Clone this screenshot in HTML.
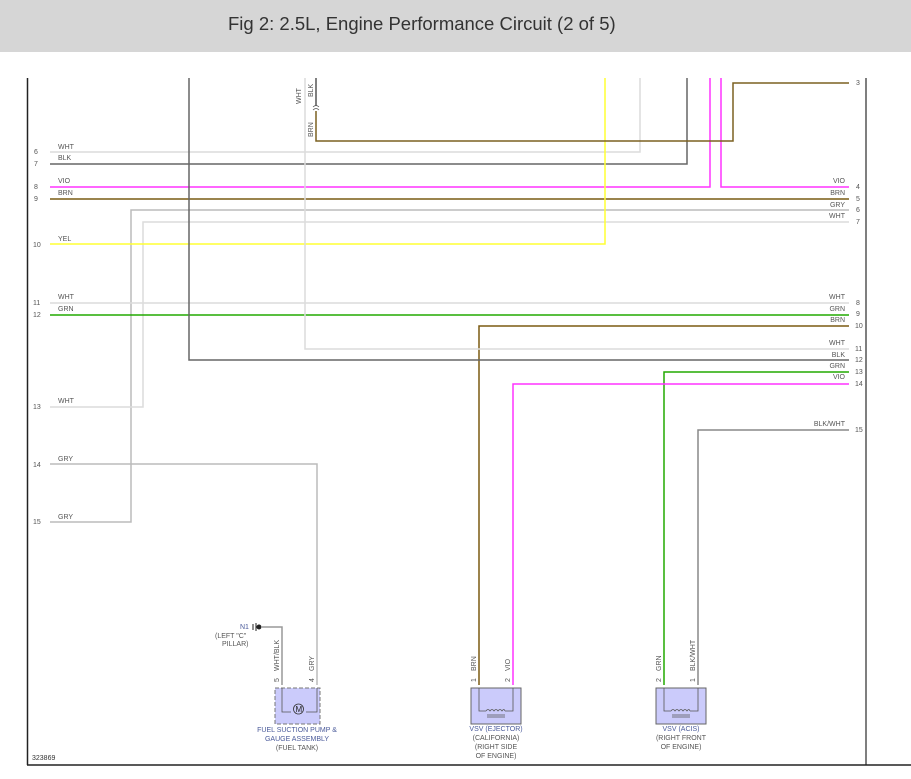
<!DOCTYPE html>
<html><head><meta charset="utf-8"><style>
html,body{margin:0;padding:0;background:#fff;width:911px;height:779px;overflow:hidden}
.hdr{position:absolute;left:0;top:0;width:911px;height:52px;background:#d6d6d6;}
.hdr span{position:absolute;left:228px;top:13px;font:18.5px "Liberation Sans",sans-serif;color:#333;}
svg{position:absolute;left:0;top:0}
text{font-family:"Liberation Sans",sans-serif;font-size:7px;fill:#555}
.b{fill:#4a5a9a}
</style></head><body>
<div class="hdr"><span>Fig 2: 2.5L, Engine Performance Circuit (2 of 5)</span></div>
<svg width="911" height="779" viewBox="0 0 911 779">
<g fill="none" stroke-width="1.5">
<line x1="27.5" y1="78" x2="27.5" y2="765" stroke="#222" stroke-width="1.5"/>
<line x1="866" y1="78" x2="866" y2="765" stroke="#555" stroke-width="1.5"/>
<line x1="27" y1="765" x2="911" y2="765" stroke="#222" stroke-width="1.5"/>
<polyline points="50,152 640,152 640,78" stroke="#dcdcdc"/>
<polyline points="50,164 687,164 687,78" stroke="#666"/>
<polyline points="50,187 710,187 710,78" stroke="#ff33ff"/>
<polyline points="721,78 721,187 849,187" stroke="#ff33ff"/>
<line x1="50" y1="199" x2="849" y2="199" stroke="#8b7335" stroke-width="1.8"/>
<polyline points="849,210 131,210 131,522 50,522" stroke="#bbb"/>
<polyline points="849,222 143,222 143,407 50,407" stroke="#dcdcdc"/>
<polyline points="50,244 605,244 605,78" stroke="#ffff33"/>
<line x1="50" y1="303" x2="849" y2="303" stroke="#dcdcdc"/>
<line x1="50" y1="315" x2="849" y2="315" stroke="#22aa00"/>
<polyline points="849,326 479,326 479,685" stroke="#7b5a10"/>
<polyline points="189,78 189,360 849,360" stroke="#666"/>
<polyline points="305,78 305,349 849,349" stroke="#dcdcdc"/>
<polyline points="316,78 316,106" stroke="#555"/>
<polyline points="316,111 316,141 733,141 733,83 849,83" stroke="#7b6020"/>
<path d="M313,107 q3,-3 6,0 M313,110 q3,-3 6,0" stroke="#555" stroke-width="0.8"/>
<polyline points="849,372 664,372 664,685" stroke="#22aa00"/>
<polyline points="849,384 513,384 513,685" stroke="#ff33ff"/>
<polyline points="849,430 698,430 698,685" stroke="#888"/>
<polyline points="50,464 317,464 317,685" stroke="#bbb"/>
<polyline points="262,627 282,627 282,685" stroke="#999"/>
</g>
<g stroke="#222" stroke-width="1"><line x1="253" y1="624" x2="253" y2="630"/><line x1="256" y1="623" x2="256" y2="631"/><circle cx="259" cy="627" r="2" fill="#222"/></g>
<g>
<text x="34" y="154">6</text><text x="34" y="166">7</text><text x="34" y="189">8</text><text x="34" y="201">9</text>
<text x="33" y="247">10</text><text x="33" y="305">11</text><text x="33" y="317">12</text><text x="33" y="409">13</text>
<text x="33" y="467">14</text><text x="33" y="524">15</text>
<text x="58" y="149">WHT</text><text x="58" y="160">BLK</text><text x="58" y="183">VIO</text><text x="58" y="195">BRN</text>
<text x="58" y="241">YEL</text><text x="58" y="299">WHT</text><text x="58" y="311">GRN</text><text x="58" y="403">WHT</text>
<text x="58" y="461">GRY</text><text x="58" y="519">GRY</text>
</g>
<g text-anchor="end">
<text x="845" y="183">VIO</text><text x="845" y="195">BRN</text><text x="845" y="207">GRY</text><text x="845" y="218">WHT</text>
<text x="845" y="299">WHT</text><text x="845" y="311">GRN</text><text x="845" y="322">BRN</text>
<text x="845" y="345">WHT</text><text x="845" y="357">BLK</text><text x="845" y="368">GRN</text><text x="845" y="379">VIO</text>
<text x="845" y="426">BLK/WHT</text>
</g>
<g>
<text x="856" y="85">3</text><text x="856" y="189">4</text><text x="856" y="201">5</text><text x="856" y="212">6</text><text x="856" y="224">7</text>
<text x="856" y="305">8</text><text x="856" y="316">9</text><text x="855" y="328">10</text><text x="855" y="351">11</text><text x="855" y="362">12</text>
<text x="855" y="374">13</text><text x="855" y="386">14</text><text x="855" y="432">15</text>
</g>
<text transform="translate(301,104) rotate(-90)">WHT</text>
<text transform="translate(313,97) rotate(-90)">BLK</text>
<text transform="translate(313,137) rotate(-90)">BRN</text>
<g>
<text transform="translate(279,682) rotate(-90)">5</text><text transform="translate(279,671) rotate(-90)">WHT/BLK</text>
<text transform="translate(314,682) rotate(-90)">4</text><text transform="translate(314,671) rotate(-90)">GRY</text>
<text transform="translate(476,682) rotate(-90)">1</text><text transform="translate(476,671) rotate(-90)">BRN</text>
<text transform="translate(510,682) rotate(-90)">2</text><text transform="translate(510,671) rotate(-90)">VIO</text>
<text transform="translate(661,682) rotate(-90)">2</text><text transform="translate(661,671) rotate(-90)">GRN</text>
<text transform="translate(695,682) rotate(-90)">1</text><text transform="translate(695,671) rotate(-90)">BLK/WHT</text>
</g>
<rect x="275" y="688" width="45" height="36" fill="#cbcbfb" stroke="#777" stroke-dasharray="4,2"/>
<polyline points="282,688 282,712 291,712" fill="none" stroke="#555" stroke-width="0.8"/>
<polyline points="317,688 317,712 306,712" fill="none" stroke="#555" stroke-width="0.8"/>
<circle cx="298.5" cy="709" r="5" fill="#cbcbfb" stroke="#333" stroke-width="0.8"/>
<text x="295.5" y="712" style="font-size:8px;fill:#222">M</text>
<rect x="471" y="688" width="50" height="36" fill="#cbcbfb" stroke="#666"/>
<polyline points="479,688 479,711 486,711" fill="none" stroke="#555" stroke-width="0.8"/>
<polyline points="513,688 513,711 505,711" fill="none" stroke="#555" stroke-width="0.8"/>
<path d="M486,711 q2,-3 4,0 q2,-3 4,0 q2,-3 4,0 q2,-3 4,0 q2,-3 3,0 M487,715 h18 M487,717 h18" fill="none" stroke="#555" stroke-width="0.7"/>
<rect x="656" y="688" width="50" height="36" fill="#cbcbfb" stroke="#666"/>
<polyline points="664,688 664,711 671,711" fill="none" stroke="#555" stroke-width="0.8"/>
<polyline points="698,688 698,711 690,711" fill="none" stroke="#555" stroke-width="0.8"/>
<path d="M671,711 q2,-3 4,0 q2,-3 4,0 q2,-3 4,0 q2,-3 4,0 q2,-3 3,0 M672,715 h18 M672,717 h18" fill="none" stroke="#555" stroke-width="0.7"/>
<g text-anchor="middle">
<text x="297" y="732" class="b">FUEL SUCTION PUMP &amp;</text>
<text x="297" y="741" class="b">GAUGE ASSEMBLY</text>
<text x="297" y="750">(FUEL TANK)</text>
<text x="496" y="731" class="b">VSV (EJECTOR)</text>
<text x="496" y="740">(CALIFORNIA)</text>
<text x="496" y="749">(RIGHT SIDE</text>
<text x="496" y="758">OF ENGINE)</text>
<text x="681" y="731" class="b">VSV (ACIS)</text>
<text x="681" y="740">(RIGHT FRONT</text>
<text x="681" y="749">OF ENGINE)</text>
</g>
<text x="240" y="629" class="b">N1</text>
<text x="215" y="638">(LEFT "C"</text>
<text x="222" y="646">PILLAR)</text>
<text x="32" y="760" style="font-size:7px;fill:#333">323869</text>
</svg>
</body></html>
